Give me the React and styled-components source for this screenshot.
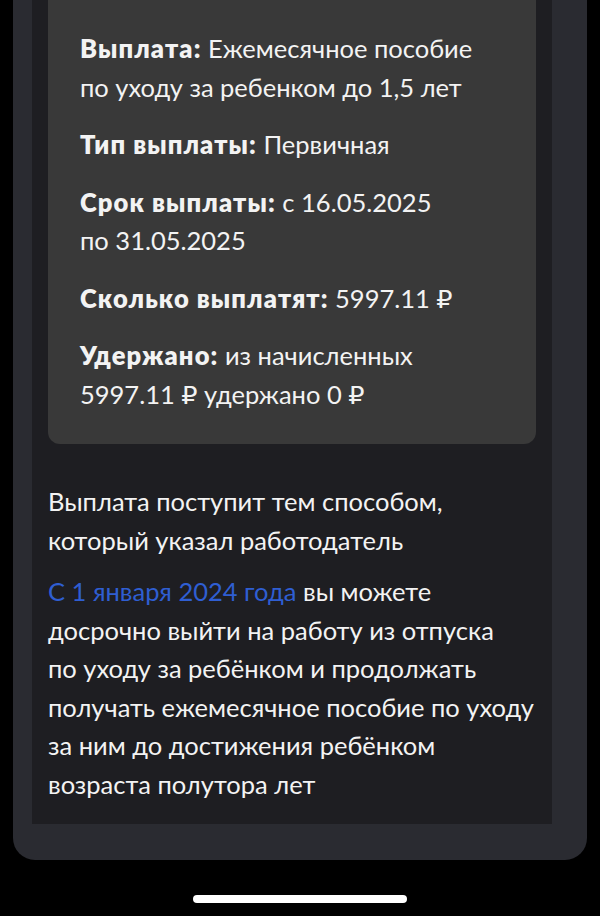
import styled, { createGlobalStyle } from "styled-components";

const GlobalStyle = createGlobalStyle`
  html, body {
    margin: 0;
    padding: 0;
    background: #000;
  }
  body {
    font-family: Lato, "Open Sans", "DejaVu Sans", sans-serif;
    -webkit-font-smoothing: antialiased;
  }
`;

// lines are split where the reference breaks them
const details = [
  { label: "Выплата:", lines: ["Ежемесячное пособие", "по уходу за ребенком до 1,5 лет"] },
  { label: "Тип выплаты:", lines: ["Первичная"] },
  { label: "Срок выплаты:", lines: ["с 16.05.2025", "по 31.05.2025"] },
  { label: "Сколько выплатят:", lines: ["5997.11 ₽"] },
  { label: "Удержано:", lines: ["из начисленных", "5997.11 ₽ удержано 0 ₽"] },
];

const notice = [
  "досрочно выйти на работу из отпуска",
  "по уходу за ребёнком и продолжать",
  "получать ежемесячное пособие по уходу",
  "за ним до достижения ребёнком",
  "возраста полутора лет",
];

const App = () => {
  return (
    <>
      <GlobalStyle />
      <Screen>
        <Sheet>
          <Panel>
            <InfoCard>
              {details.map(({ label, lines }) => (
                <InfoRow key={label}>
                  <Label>{label}</Label> {lines[0]}
                  {lines.slice(1).map((l) => (
                    <span key={l}>
                      <br />
                      {l}
                    </span>
                  ))}
                </InfoRow>
              ))}
            </InfoCard>

            <Text>
              Выплата поступит тем способом,
              <br />
              который указал работодатель
            </Text>

            <Text>
              <Link href="#">С 1 января 2024 года</Link> вы можете
              {notice.map((l) => (
                <span key={l}>
                  <br />
                  {l}
                </span>
              ))}
            </Text>
          </Panel>
        </Sheet>

        <HomeBar />
      </Screen>
    </>
  );
};

export default App;

/* ---------------- styled-components ---------------- */

const Screen = styled.div`
  height: 916px;
  padding: 0 13px;
  box-sizing: border-box;
  display: flex;
  flex-direction: column;
  overflow: hidden;
`;

const Sheet = styled.div`
  background: #2a2b31;
  border-radius: 0 0 22px 22px;
  padding: 0 35px 36px 19px;
`;

const Panel = styled.div`
  background: #1e1e22;
  padding: 0 16px 21px;
  color: #f3f3f3;
`;

const InfoCard = styled.div`
  background: #393939;
  border-radius: 0 0 12px 12px;
  padding: 29px 32px 31px;
  display: flex;
  flex-direction: column;
  gap: 19px;
  margin-bottom: 38px;
`;

const InfoRow = styled.div`
  font-size: 25.5px;
  line-height: 38.5px;
  white-space: nowrap;
`;

const Label = styled.b`
  font-weight: 800;
  letter-spacing: 1.1px;
`;

const Text = styled.p`
  margin: 0 0 13px;
  font-size: 25.5px;
  line-height: 38.5px;
  white-space: nowrap;

  &:last-child {
    margin-bottom: 0;
  }
`;

const Link = styled.a`
  color: #2f5ed2;
  text-decoration: none;
`;

const HomeBar = styled.div`
  align-self: center;
  width: 214px;
  height: 8px;
  border-radius: 4px;
  background: #fff;
  margin-top: 35px;
`;
